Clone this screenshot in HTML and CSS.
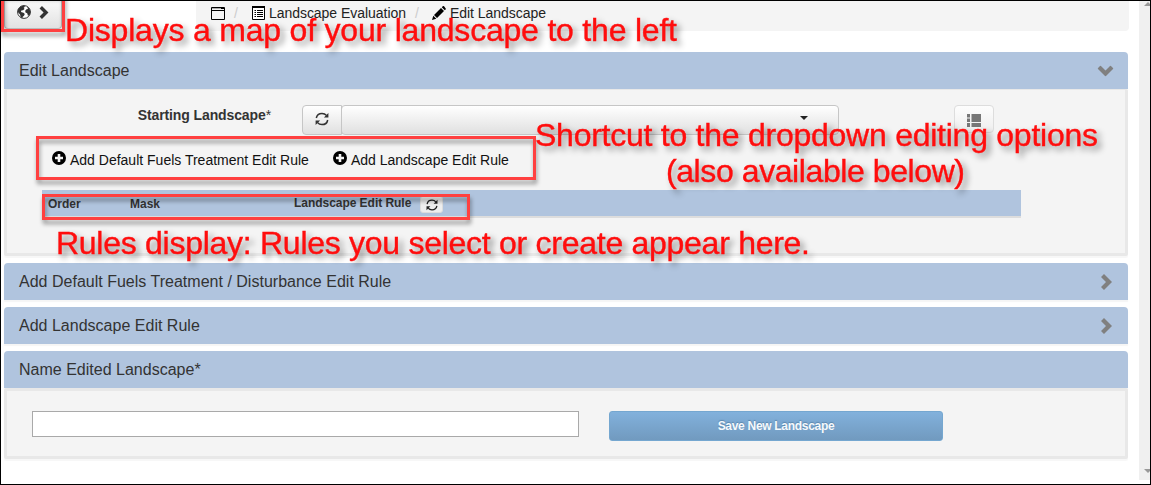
FILE: index.html
```html
<!DOCTYPE html>
<html lang="en">
<head>
<meta charset="utf-8">
<title>Edit Landscape</title>
<link rel="stylesheet" href="styles.css">
</head>
<body>
<svg class="defs" width="0" height="0">
  <symbol id="refresh" viewBox="0 0 14 14">
    <path d="M1.300 6C1.800 3.200 4.200 1.400 7 1.400c1.800 0 3.400.7 4.400 2M12.700 8c-.5 2.800-2.900 4.600-5.700 4.600-1.800 0-3.400-.7-4.400-2" fill="none" stroke="currentColor" stroke-width="1.500"/>
    <path d="M13.400 1v4.500H8.900zM.6 13V8.500h4.500z" fill="currentColor"/>
  </symbol>
  <symbol id="plus" viewBox="0 0 14 14">
    <path fill-rule="evenodd" d="M7 0a7 7 0 1 0 0 14A7 7 0 0 0 7 0zM5.700 3h2.600v2.700H11v2.600H8.300V11H5.700V8.300H3V5.700h2.700z" fill="currentColor"/>
  </symbol>
  <symbol id="chevron" viewBox="0 0 11 16">
    <path d="M3 0l8 8-8 8-3-3 5-5-5-5z" fill="currentColor"/>
  </symbol>
</svg>
<div class="window">
  <main class="page">
    <div class="topbar">
      <button class="map-toggle" aria-label="Show map">
        <svg width="14" height="14" viewBox="0 0 14 14"><circle cx="7" cy="7" r="6.400" fill="#fff" stroke="#333"/><path d="M1 4.500L3.500 1.500 7 .5l1 1.300-1.300 1L7.500 4 6 5.200 4.300 5.500 4 7l2.500.8L7.800 9 7 10.700 5.500 12v1.200L3.800 12.500 3 9.500.8 7zM10 1.600L12.500 3.800 13.500 7l-.8 3-1.700.8-.8-2.600L8.500 7.500 8.200 5.700 9.500 4.200 11 4z" fill="#333"/></svg>
        <svg width="10" height="13"><use href="#chevron"/></svg>
      </button>
      <nav class="crumbs">
        <svg width="14" height="13" viewBox="0 0 14 13"><path d="M.5.5h13v12H.5zM.5 3.500h13" fill="none" stroke="#000"/><path d="M1 1.500h9" stroke="#aaa"/><path d="M10 1.500h3" stroke="#000"/></svg>
        <span class="slash">/</span>
        <svg class="list-icon" width="13" height="14" viewBox="0 0 13 14"><path d="M.5.5h12v13H.5z" fill="#fff" stroke="#000"/><path d="M0 1h13" stroke="#000" stroke-width="2"/><path d="M2.500 4.500H4M5 4.500h6M2.500 6.500H4M5 6.500h6M2.500 8.500H4M5 8.500h6M2.500 10.500H4M5 10.500h6" stroke="#000"/></svg>
        <span class="crumb">Landscape Evaluation</span>
        <span class="slash second">/</span>
        <svg class="pencil" width="14" height="14" viewBox="0 0 14 14"><path d="M0 14l1.300-4.300 3 3zM2 9l7-7 3 3-7 7zM9.800 1.200L11 0c.5-.3 1 0 3 3l-1.200 1.200z" fill="#000"/></svg>
        <span class="crumb">Edit Landscape</span>
      </nav>
    </div>

    <section class="panel edit">
      <h2 class="head">Edit Landscape<svg class="down" width="11" height="16"><use href="#chevron"/></svg></h2>
      <div class="body">
        <div class="start-row">
          <label><b>Starting Landscape</b>*</label>
          <div class="select">
            <button class="btn reload" aria-label="Refresh"><svg width="14" height="14"><use href="#refresh"/></svg></button>
            <button class="btn choice" aria-label="Choose landscape"><i class="caret"></i></button>
          </div>
          <button class="btn list" aria-label="List"><svg width="14" height="13" viewBox="0 0 14 13"><path d="M0 0h3v3.500H0zM4.500 0H14v8H4.500zM0 4.500h3V8H0zM0 9h3v4H0zM4.500 9H14v4H4.500z" fill="#777"/></svg></button>
        </div>
        <div class="links">
          <a><svg width="14" height="14"><use href="#plus"/></svg><span>Add Default Fuels Treatment Edit Rule</span></a>
          <a><svg width="14" height="14"><use href="#plus"/></svg><span>Add Landscape Edit Rule</span></a>
        </div>
        <div class="rules">
          <span>Order</span><span>Mask</span><span class="rule">Landscape Edit Rule
            <button class="mini" aria-label="Refresh rules"><svg width="12" height="12"><use href="#refresh"/></svg></button></span>
        </div>
      </div>
    </section>

    <section class="panel"><h2 class="head">Add Default Fuels Treatment / Disturbance Edit Rule<svg width="11" height="16"><use href="#chevron"/></svg></h2></section>
    <section class="panel"><h2 class="head">Add Landscape Edit Rule<svg width="11" height="16"><use href="#chevron"/></svg></h2></section>
    <section class="panel name">
      <h2 class="head">Name Edited Landscape*</h2>
      <div class="body">
        <input type="text" aria-label="Name">
        <button class="save">Save New Landscape</button>
      </div>
    </section>
  </main>
  <div class="scrollbar"><i class="up"></i><i class="dn"></i></div>
</div>

<svg class="notes" width="1151" height="485" viewBox="0 0 1151 485">
  <g class="frames">
    <path d="M2.500-6h61v36.500h-61z"/>
    <path d="M37.500 137.500h497v41h-497z"/>
    <path d="M43.500 195.500h425v23h-425z"/>
  </g>
  <g class="captions">
    <text x="65" y="41" textLength="612">Displays a map of your landscape to the left</text>
    <text x="535" y="146" textLength="563">Shortcut to the dropdown editing options</text>
    <text x="666" y="182" textLength="299">(also available below)</text>
    <text x="56" y="254" textLength="754">Rules display: Rules you select or create appear here.</text>
  </g>
</svg>
<div class="edge"></div>
</body>
</html>
```
FILE: styles.css
```css
* { box-sizing: border-box; }
body {
  margin: 0;
  width: 1151px;
  height: 485px;
  overflow: hidden;
  background: #fff;
  color: #333;
  font-family: "Liberation Sans", Arial, sans-serif;
  font-size: 14px;
}
button { font-family: inherit; padding: 0; }
svg { display: block; flex: none; }
.defs { position: absolute; }

.window { display: flex; justify-content: space-between; height: 485px; padding: 1px; }
.page { width: 1128px; padding-left: 3px; }

.topbar { display: flex; height: 51px; align-items: flex-start; }
.map-toggle {
  display: flex;
  align-items: center;
  gap: 8px;
  width: 58px;
  height: 28px;
  margin-right: 134px;
  padding: 0 0 5px 12px;
  border: 1px solid #bbb;
  border-top: 0;
  border-radius: 0 0 4px 4px;
  background: linear-gradient(#fafafa, #e2e2e2);
  color: #333;
}
.crumbs {
  display: flex;
  align-items: center;
  flex: none;
  width: 933px;
  height: 30px;
  padding: 0 0 6px 15px;
  border-radius: 0 0 4px 4px;
  background: #f4f4f4;
  color: #222;
}
.slash { color: #ccc; margin: 0 14px 0 9px; }
.slash.second { margin: 0 13px 0 9px; }
.list-icon { margin-right: 4px; }
.pencil { margin-right: 4px; }
.crumb { letter-spacing: -.03px; }

.panel { width: 1124px; margin-bottom: 7px; }
.head {
  display: flex;
  align-items: center;
  justify-content: space-between;
  height: 37px;
  margin: 0;
  padding: 0 16px 0 15px;
  border-radius: 4px 4px 0 0;
  background: #b0c4de;
  box-shadow: 0 2px 1px #f5f5f5;
  font-size: 16px;
  font-weight: 400;
  letter-spacing: .01px;
}
.head svg { color: #808080; }
.head .down { transform: rotate(90deg); margin-right: 1px; }
.body {
  border: 3px solid #e8e8e8;
  border-radius: 2px;
  background: #f4f4f4;
  box-shadow: 0 2px 1px #f7f7f7;
}
.edit .body { height: 167px; border-top-width: 1px; }

.start-row { display: flex; height: 46px; padding-top: 15px; }
.start-row label { width: 295px; padding: 2px 31px 0 0; text-align: right; line-height: 16px; letter-spacing: -.11px; }
.select { display: flex; width: 537px; }
.btn {
  display: flex;
  align-items: center;
  justify-content: center;
  height: 30px;
  border: 1px solid #c6c6c6;
  border-radius: 4px;
  background: linear-gradient(#fff, #e0e0e0);
  color: #333;
}
.reload { width: 40px; border-radius: 4px 0 0 4px; margin-right: -1px; padding: 0 1px 2px 0; }
.choice { width: 498px; justify-content: flex-end; padding: 0 30px 4px 0; }
.caret { border: 4px solid transparent; border-top-color: #222; border-bottom: 0; }
.list { width: 40px; height: 28px; margin-left: 115px; padding-top: 2px; border-color: #ddd; background: linear-gradient(#fdfdfd, #eee); }
.links { display: flex; gap: 24px; height: 54px; padding: 16px 0 0 45px; color: #111; }
.links a { display: flex; gap: 4px; height: 16px; line-height: 16px; }
.links svg { margin-top: -1px; color: #000; }
.rules {
  display: grid;
  grid-template-columns: 82px 164px 1fr;
  width: 979px;
  height: 28px;
  margin-left: 35px;
  padding: 7px 0 0 6px;
  border-bottom: 2px solid #ddd;
  background: #b0c4de;
  font-size: 12px;
  font-weight: 700;
  line-height: 15px;
}
.rule { display: flex; gap: 9px; margin-top: -1px; letter-spacing: -.04px; }
.mini {
  display: grid;
  place-items: center;
  width: 23px;
  height: 17px;
  border: 1px solid #ddd;
  border-radius: 3px;
  background: #eee;
  color: #222;
}

.name .body { display: flex; align-items: flex-start; height: 71px; padding: 20px 25px; }
.name input { width: 547px; height: 26px; padding: 0 6px; border: 1px solid #a9a9a9; background: #fff; }
.save {
  width: 334px;
  height: 30px;
  margin-left: 30px;
  border: 1px solid #75a7d0;
  border-radius: 3px;
  background: linear-gradient(#82b1dc, #719abf);
  color: #f5f9fc;
  font-size: 12px;
  font-weight: 700;
  letter-spacing: -.3px;
  text-shadow: 0 -1px 1px #5a86ad;
}

.scrollbar { display: flex; flex-direction: column; justify-content: space-between; width: 11px; height: 479px; padding: 1px 0 7px 5px; background: #f0f0f0; overflow: hidden; }
.up, .dn { width: 8px; height: 4px; background: #999; clip-path: polygon(50% 0, 100% 100%, 0 100%); }
.dn { transform: rotate(180deg); }

/* Callouts laid over the form */
.notes { position: absolute; left: 0; top: 0; }
.frames { fill: none; stroke: #ff4040; stroke-width: 3; filter: drop-shadow(1px 4px 2px rgba(0, 0, 0, .4)); }
.captions { fill: #ff0d0d; stroke: #ff0d0d; stroke-width: .4; font-size: 32px; filter: drop-shadow(4px 4px 3px rgba(0, 0, 0, .42)); }
.edge { position: absolute; inset: 0; width: 1151px; height: 485px; border: 1px solid #000; }
```
